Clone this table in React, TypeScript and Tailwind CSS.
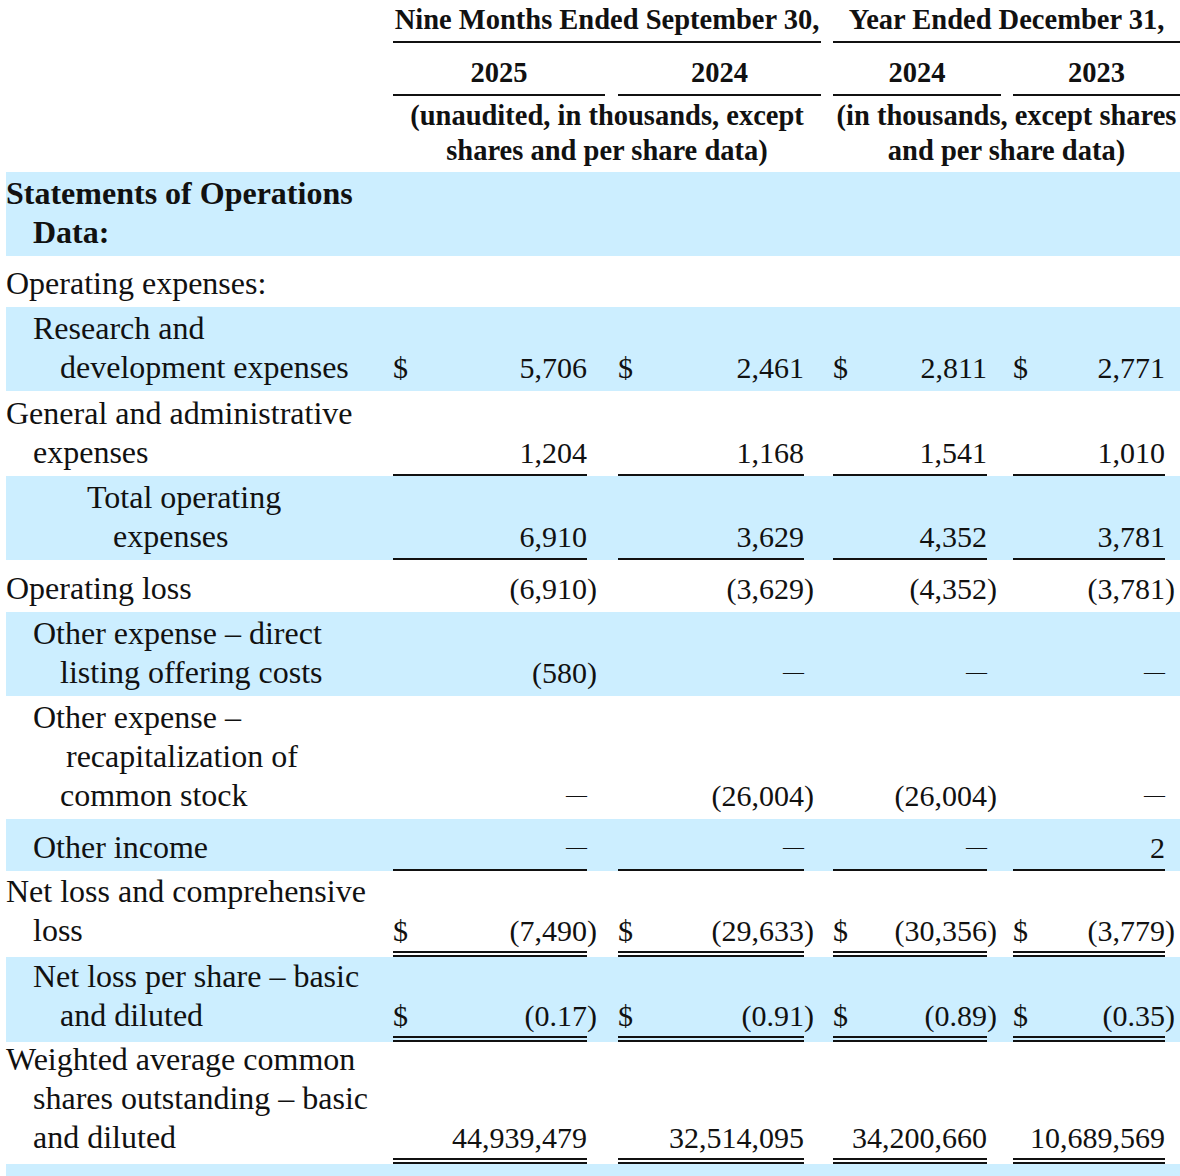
import React from "react"

type Line = { text: string; indent: string }

type RowProps = {
  lines: Line[]
  values?: string[]
  dollar?: boolean
  rule?: "single" | "double"
  blue?: boolean
  bold?: boolean
  height: string
}

const DATA_W = ["w-[194px]", "w-[186px]", "w-[154px]", "w-[152px]"]
const PAREN_W = ["w-[18px]", "w-[17px]", "w-[14px]", "w-[15px]"]
const GAP_W = ["w-[13px]", "w-[12px]", "w-[12px]", "w-0"]

const Row: React.FC<RowProps> = ({ lines, values, dollar, rule, blue, bold, height }) => {
  const labelPad = rule === "double" ? "pb-[7px]" : "pb-[4px]"
  const dataPad = rule === "double" ? "pb-[1px]" : rule ? "pb-[2px]" : "pb-[4px]"
  const ruleCls =
    rule === "single"
      ? "border-b-2 border-[#111]"
      : rule === "double"
        ? "border-b-[6px] border-double border-[#111]"
        : ""

  return (
    <div className={`flex ${height} ${blue ? "bg-[#cceeff]" : ""}`}>
      <div className={`flex w-[387px] flex-col justify-end ${labelPad} ${bold ? "font-bold" : ""}`}>
        {lines.map((l, i) => (
          <div key={i} className={`${l.indent} whitespace-nowrap text-[32px] leading-[39px]`}>
            {l.text}
          </div>
        ))}
      </div>
      {values &&
        values.map((v, i) => {
          const closes = v.endsWith(")")
          const num = closes ? v.slice(0, -1) : v
          return (
            <React.Fragment key={i}>
              <div
                className={`${DATA_W[i]} flex items-end justify-between ${dataPad} ${ruleCls} text-[30px] leading-[39px]`}
              >
                <span>{dollar ? "$" : ""}</span>
                {num === "—" ? <span className="text-[21px]">—</span> : <span>{num}</span>}
              </div>
              <div className={`${PAREN_W[i]} flex items-end ${labelPad} text-[30px] leading-[39px]`}>
                {closes ? ")" : ""}
              </div>
              <div className={GAP_W[i]} />
            </React.Fragment>
          )
        })}
    </div>
  )
}

const App: React.FC = () => {
  return (
    <div className="min-h-[1176px] w-[1180px] overflow-hidden bg-white font-['Liberation_Serif',serif] text-[#111]">
      <div className="ml-[6px] w-[1174px]">
        {/* column headings */}
        <div className="flex h-[43px] text-[28.5px] font-bold leading-[35px]">
          <div className="w-[387px]" />
          <div className="flex w-[428px] items-end justify-center border-b-2 border-[#111] pb-[4px] whitespace-nowrap">
            Nine Months Ended September 30,
          </div>
          <div className="w-[12px]" />
          <div className="flex w-[347px] items-end justify-center border-b-2 border-[#111] pb-[4px] whitespace-nowrap">
            Year Ended December 31,
          </div>
        </div>
        <div className="flex h-[53px] text-[28.5px] font-bold leading-[35px]">
          <div className="w-[387px]" />
          <div className="flex w-[212px] items-end justify-center border-b-2 border-[#111] pb-[4px]">2025</div>
          <div className="w-[13px]" />
          <div className="flex w-[203px] items-end justify-center border-b-2 border-[#111] pb-[4px]">2024</div>
          <div className="w-[12px]" />
          <div className="flex w-[168px] items-end justify-center border-b-2 border-[#111] pb-[4px]">2024</div>
          <div className="w-[12px]" />
          <div className="flex w-[167px] items-end justify-center border-b-2 border-[#111] pb-[4px]">2023</div>
        </div>
        <div className="flex h-[76px] pt-[2px] text-[28.5px] font-bold leading-[35px]">
          <div className="w-[387px]" />
          <div className="w-[428px] text-center whitespace-nowrap">
            (unaudited, in thousands, except
            <br />
            shares and per share data)
          </div>
          <div className="w-[12px]" />
          <div className="w-[347px] text-center whitespace-nowrap">
            (in thousands, except shares
            <br />
            and per share data)
          </div>
        </div>

        {/* body */}
        <Row
          blue
          bold
          height="h-[84px]"
          lines={[
            { text: "Statements of Operations", indent: "pl-0" },
            { text: "Data:", indent: "pl-[27px]" }
          ]}
        />
        <Row height="h-[51px]" lines={[{ text: "Operating expenses:", indent: "pl-0" }]} />
        <Row
          blue
          dollar
          height="h-[84px]"
          lines={[
            { text: "Research and", indent: "pl-[27px]" },
            { text: "development expenses", indent: "pl-[54px]" }
          ]}
          values={["5,706", "2,461", "2,811", "2,771"]}
        />
        <Row
          rule="single"
          height="h-[85px]"
          lines={[
            { text: "General and administrative", indent: "pl-0" },
            { text: "expenses", indent: "pl-[27px]" }
          ]}
          values={["1,204", "1,168", "1,541", "1,010"]}
        />
        <Row
          blue
          rule="single"
          height="h-[84px]"
          lines={[
            { text: "Total operating", indent: "pl-[81px]" },
            { text: "expenses", indent: "pl-[107px]" }
          ]}
          values={["6,910", "3,629", "4,352", "3,781"]}
        />
        <Row
          height="h-[52px]"
          lines={[{ text: "Operating loss", indent: "pl-0" }]}
          values={["(6,910)", "(3,629)", "(4,352)", "(3,781)"]}
        />
        <Row
          blue
          height="h-[84px]"
          lines={[
            { text: "Other expense – direct", indent: "pl-[27px]" },
            { text: "listing offering costs", indent: "pl-[54px]" }
          ]}
          values={["(580)", "—", "—", "—"]}
        />
        <Row
          height="h-[123px]"
          lines={[
            { text: "Other expense –", indent: "pl-[27px]" },
            { text: "recapitalization of", indent: "pl-[60px]" },
            { text: "common stock", indent: "pl-[54px]" }
          ]}
          values={["—", "(26,004)", "(26,004)", "—"]}
        />
        <Row
          blue
          rule="single"
          height="h-[52px]"
          lines={[{ text: "Other income", indent: "pl-[27px]" }]}
          values={["—", "—", "—", "2"]}
        />
        <Row
          dollar
          rule="double"
          height="h-[86px]"
          lines={[
            { text: "Net loss and comprehensive", indent: "pl-0" },
            { text: "loss", indent: "pl-[27px]" }
          ]}
          values={["(7,490)", "(29,633)", "(30,356)", "(3,779)"]}
        />
        <Row
          blue
          dollar
          rule="double"
          height="h-[85px]"
          lines={[
            { text: "Net loss per share – basic", indent: "pl-[27px]" },
            { text: "and diluted", indent: "pl-[54px]" }
          ]}
          values={["(0.17)", "(0.91)", "(0.89)", "(0.35)"]}
        />
        <Row
          rule="double"
          height="h-[122px]"
          lines={[
            { text: "Weighted average common", indent: "pl-0" },
            { text: "shares outstanding – basic", indent: "pl-[27px]" },
            { text: "and diluted", indent: "pl-[27px]" }
          ]}
          values={["44,939,479", "32,514,095", "34,200,660", "10,689,569"]}
        />
        <Row blue height="h-[40px]" lines={[]} />
      </div>
    </div>
  )
}

export default App
